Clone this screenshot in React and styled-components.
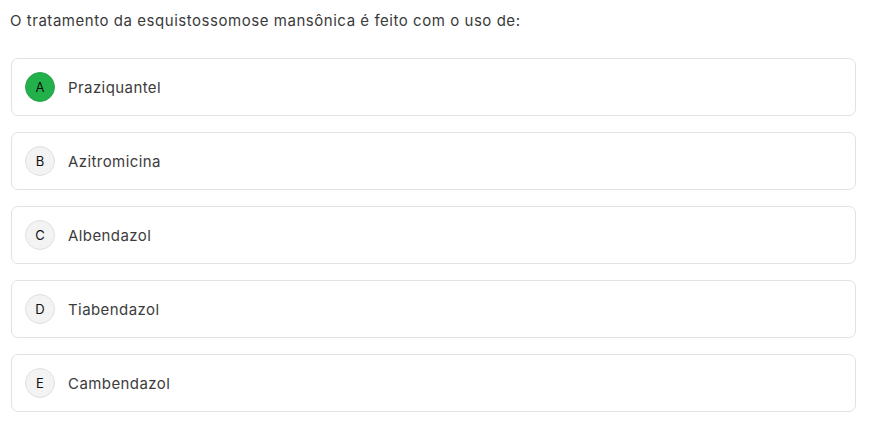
import React from 'react';
import styled, { createGlobalStyle } from 'styled-components';

const GlobalStyle = createGlobalStyle`
  body {
    margin: 0;
    background: #fff;
    font-family: Inter, "Liberation Sans", sans-serif;
  }
`;

const Page = styled.div`
  padding: 11px 14px 0 11px;
`;

const Question = styled.p`
  margin: 0 0 27px -1px;
  font-size: 15px;
  line-height: 20px;
  letter-spacing: 0.54px;
  color: #3a3a3a;
`;

const Options = styled.div`
  display: flex;
  flex-direction: column;
  gap: 16px;
`;

const Option = styled.div`
  display: flex;
  align-items: center;
  gap: 13px;
  padding: 13px;
  border: 1px solid #e2e2e2;
  border-radius: 7px;
  background: #fff;
  cursor: pointer;
`;

const Letter = styled.span`
  display: flex;
  align-items: center;
  justify-content: center;
  width: 30px;
  height: 30px;
  box-sizing: border-box;
  border-radius: 50%;
  font-size: 13px;
  color: #111;
  background: ${props => (props.selected ? '#22b04b' : '#f3f3f3')};
  border: 1px solid ${props => (props.selected ? '#2fa552' : '#e0e0e0')};
`;

const Label = styled.span`
  font-size: 15px;
  letter-spacing: 0.42px;
  color: #3c3c3c;
`;

const options = [
  { letter: 'A', text: 'Praziquantel', selected: true },
  { letter: 'B', text: 'Azitromicina' },
  { letter: 'C', text: 'Albendazol' },
  { letter: 'D', text: 'Tiabendazol' },
  { letter: 'E', text: 'Cambendazol' },
];

const App = () => (
  <Page>
    <GlobalStyle />
    <Question>O tratamento da esquistossomose mansônica é feito com o uso de:</Question>
    <Options>
      {options.map(o => (
        <Option key={o.letter}>
          <Letter selected={o.selected}>{o.letter}</Letter>
          <Label>{o.text}</Label>
        </Option>
      ))}
    </Options>
  </Page>
);

export default App;
